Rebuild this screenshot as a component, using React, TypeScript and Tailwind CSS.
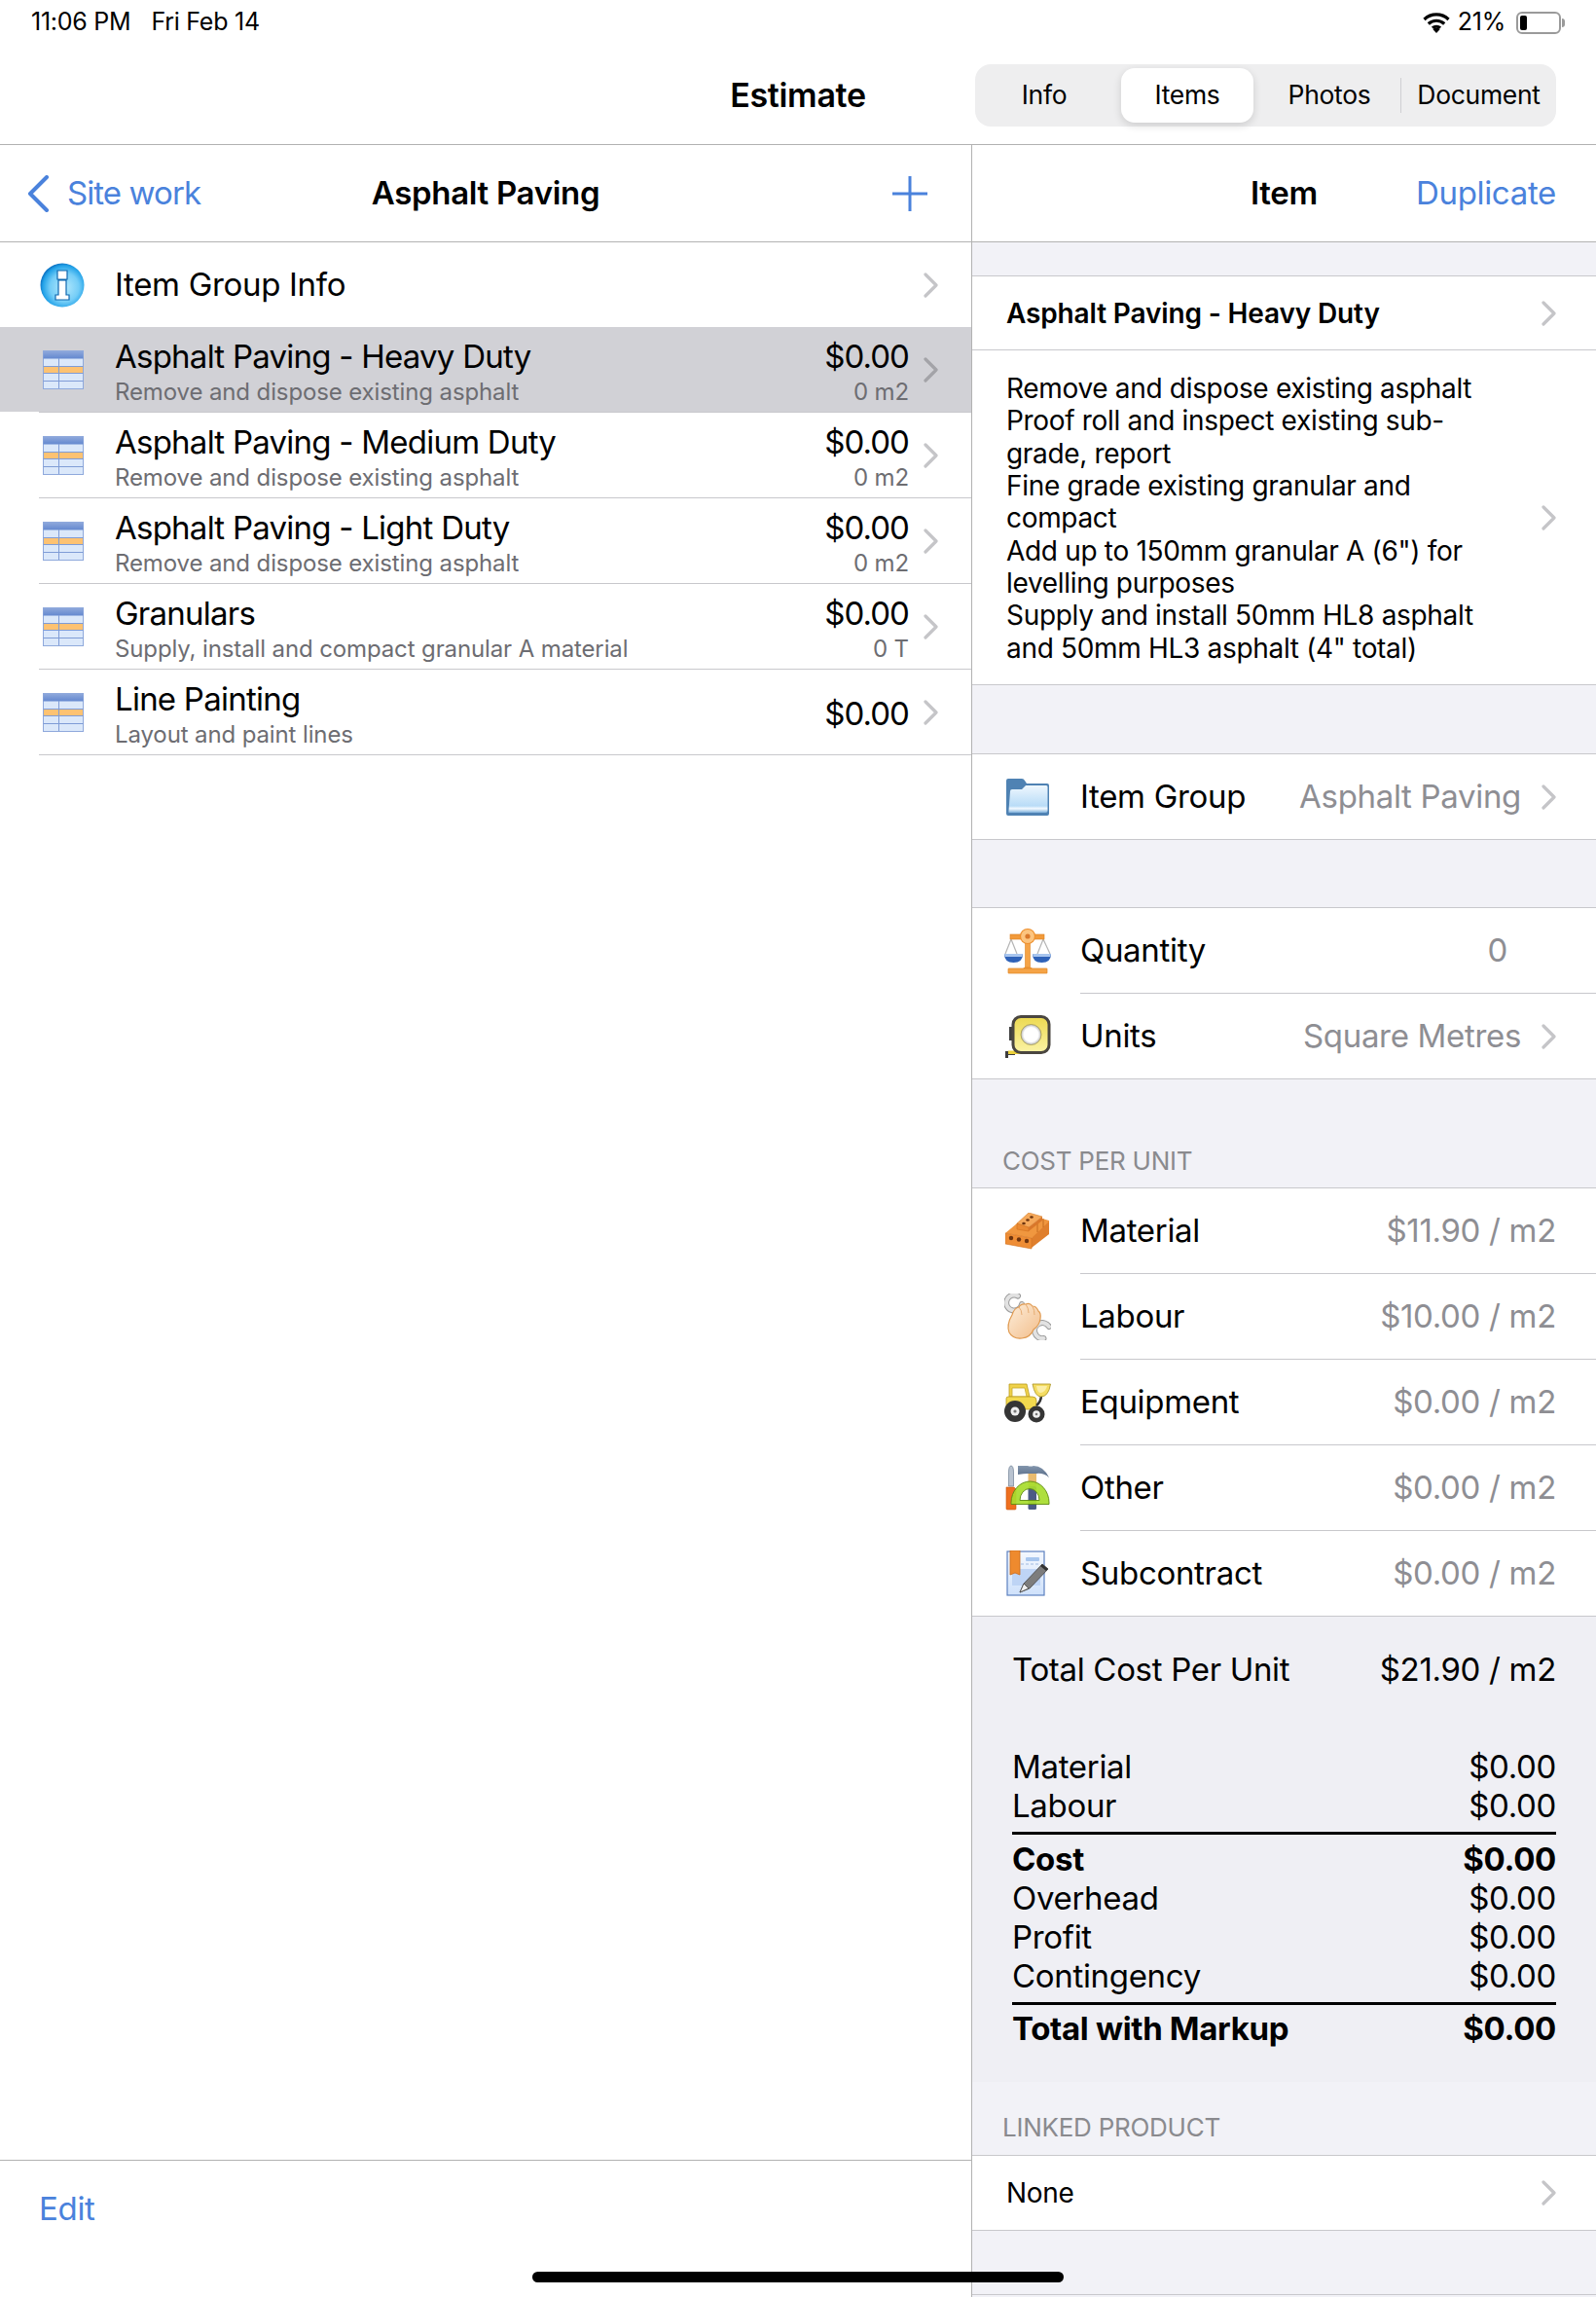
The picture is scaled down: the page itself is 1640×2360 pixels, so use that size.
import type { ReactNode } from 'react';

const Chevron = ({ selected = false }: { selected?: boolean }) => (
  <svg width="15" height="26" viewBox="0 0 15 26" fill="none" className="shrink-0">
    <path
      d="M2 2l11 11L2 24"
      stroke={selected ? '#a3a3a8' : '#c5c5c8'}
      strokeWidth="3.2"
      strokeLinecap="round"
      strokeLinejoin="round"
    />
  </svg>
);

const InfoIcon = () => (
  <svg width="46" height="46" viewBox="0 0 46 46">
    <defs>
      <radialGradient id="infoBg" cx="55%" cy="55%" r="55%">
        <stop offset="0" stopColor="#b5e9fd" />
        <stop offset="0.6" stopColor="#74cdf7" />
        <stop offset="0.9" stopColor="#22a2e8" />
        <stop offset="1" stopColor="#1079c8" />
      </radialGradient>
    </defs>
    <circle cx="23" cy="23" r="22.5" fill="url(#infoBg)" />
    <path d="M18 8h10v9H18zM19 18h8v15h3v5H16v-5h3z" fill="#fff" stroke="#0f68b0" strokeWidth="1.2" />
  </svg>
);

const TableIcon = () => (
  <svg width="44" height="40" viewBox="0 0 44 40">
    <defs>
      <linearGradient id="tableHead" x1="0" y1="0" x2="0" y2="1">
        <stop offset="0" stopColor="#8fa9dc" />
        <stop offset="1" stopColor="#6488cf" />
      </linearGradient>
    </defs>
    <rect x="1.5" y="0.5" width="41" height="39" fill="#dbe8fa" stroke="#8fa9dc" />
    <rect x="1.500" y="0.5" width="41" height="8" fill="url(#tableHead)" />
    <rect x="2" y="17" width="40" height="6" fill="#fdc272" />
    <path d="M1.500 16.500h41M1.500 23.500h41M1.500 31.500h41M17.500 8v31" stroke="#7f9cd6" strokeWidth="1" />
  </svg>
);

const FolderIcon = () => (
  <svg width="46" height="40" viewBox="0 0 46 40">
    <defs>
      <linearGradient id="folderFront" x1="0" y1="0" x2="0" y2="1">
        <stop offset="0" stopColor="#eef7fe" />
        <stop offset="0.75" stopColor="#b9dcf7" />
        <stop offset="0.85" stopColor="#f4faff" />
        <stop offset="1" stopColor="#7db0dc" />
      </linearGradient>
    </defs>
    <path d="M1 3q0-2 2-2h14q2 0 3 2l2 3h21q2 0 2 2v29q0 2-2 2H3q-2 0-2-2z" fill="#4f82b3" />
    <path d="M5 14q0-2 2-2h10l4-4h21q1.500 0 1.500 1.500V34q0 2-2 2H4q-1 0-.5-2z" fill="url(#folderFront)" />
  </svg>
);

const ScalesIcon = () => (
  <svg width="48" height="48" viewBox="0 0 48 48">
    <path d="M7 12L1 27M7 12l6 15M40 12l-6 15M40 12l7 15" stroke="#b5b5b5" strokeWidth="1.2" fill="none" />
    <rect x="6" y="7" width="35" height="5" fill="#f29a3a" stroke="#d97f1e" strokeWidth="0.6" />
    <rect x="21.500" y="12" width="5" height="29" fill="#f5a346" stroke="#dd8425" strokeWidth="0.6" />
    <circle cx="24" cy="9" r="7.500" fill="#fcc47f" stroke="#ee8f2c" strokeWidth="1.2" />
    <circle cx="24" cy="9" r="2.600" fill="#d9782b" />
    <path d="M0 27h19q0 9-9.500 9T0 27z" fill="#2f62b8" />
    <path d="M0 27h19q-.4 2-1 3H1q-.6-1-1-3z" fill="#a8c5ee" />
    <path d="M29 27h19q0 9-9.500 9T29 27z" fill="#2f62b8" />
    <path d="M29 27h19q-.4 2-1 3H30q-.6-1-1-3z" fill="#a8c5ee" />
    <path d="M20 41h8l1 2h-10z" fill="#ee9434" />
    <rect x="4" y="42" width="40" height="5" rx="0.5" fill="#f5a346" stroke="#e08726" strokeWidth="0.7" />
  </svg>
);

const TapeIcon = () => (
  <svg width="48" height="44" viewBox="0 0 48 44">
    <defs>
      <linearGradient id="tapeBody" x1="0" y1="0" x2="0" y2="1">
        <stop offset="0" stopColor="#ecd94f" />
        <stop offset="1" stopColor="#fbf3a6" />
      </linearGradient>
      <radialGradient id="tapeHole" cx="50%" cy="50%" r="50%">
        <stop offset="0.7" stopColor="#fff" />
        <stop offset="1" stopColor="#b6b6b6" />
      </radialGradient>
    </defs>
    <path d="M1 37h10v4H4v3H1z" fill="#3d3d3d" />
    <rect x="4" y="36.500" width="14" height="3.500" fill="#ecd13a" />
    <rect x="5" y="12" width="6" height="14" fill="#3f3f3f" />
    <rect x="9" y="1.500" width="37" height="37" rx="8" fill="url(#tapeBody)" stroke="#4a4640" strokeWidth="3" />
    <circle cx="27.500" cy="20" r="10.500" fill="url(#tapeHole)" stroke="#a69a4f" strokeWidth="0.8" />
  </svg>
);

const BrickIcon = () => (
  <svg width="46" height="38" viewBox="0 0 46 38">
    {/* lower layer */}
    <path d="M0 21L12 11l12 4L38 6l7 2v14L27 26z" fill="#f0973f" />
    <path d="M27 26L45 9v13L27 36z" fill="#df7f2d" />
    <path d="M33 20V10M39 15V6" stroke="#b85f18" strokeWidth="0.8" />
    <path d="M0 21l27 5v11L0 32z" fill="#ee8d35" stroke="#d0701f" strokeWidth="0.6" />
    {/* top brick */}
    <path d="M12 11L24 0l14 4-14 11z" fill="#f5a95b" stroke="#d97f2a" strokeWidth="0.6" />
    <path d="M12 11l12 4v4l-12-2z" fill="#ea8a33" stroke="#d0701f" strokeWidth="0.6" />
    <path d="M24 15L38 4v4L24 19z" fill="#d9772a" />
    <g fill="#6e3510">
      <circle cx="6" cy="26" r="2.200" />
      <circle cx="14" cy="27.500" r="2.200" />
      <circle cx="22" cy="29" r="2.200" />
      <ellipse cx="19" cy="11" rx="1.800" ry="1.200" />
      <ellipse cx="23" cy="7.500" rx="1.800" ry="1.200" />
      <ellipse cx="27" cy="4.500" rx="1.800" ry="1.200" />
    </g>
  </svg>
);

const HandIcon = () => (
  <svg width="48" height="48" viewBox="0 0 48 48">
    <defs>
      <linearGradient id="handFill" x1="0" y1="0" x2="1" y2="1">
        <stop offset="0" stopColor="#fdeedb" />
        <stop offset="1" stopColor="#f2bd8a" />
      </linearGradient>
    </defs>
    <g fill="none" strokeLinecap="round">
      <path d="M14 2.500A8 8 0 1 0 18 11" stroke="#9a9a9a" strokeWidth="6" />
      <path d="M46 34A8 8 0 1 0 40.500 46" stroke="#9a9a9a" strokeWidth="6" />
      <path d="M14 2.500A8 8 0 1 0 18 11" stroke="#e2e2e2" strokeWidth="4" />
      <path d="M46 34A8 8 0 1 0 40.500 46" stroke="#e2e2e2" strokeWidth="4" />
    </g>
    <path
      d="M8 22Q10 15 15 14 17 10 22 11 26 9 29 13 33 13 35 18 38 20 37 26 36 33 30 37 27 45 18 46 9 47 5 40 2 32 8 22z"
      fill="url(#handFill)"
      stroke="#e09a50"
      strokeWidth="1.200"
    />
    <path d="M15 14q3 3 3 8M22 11q3 4 3 9M29 13q2 4 2 9" stroke="#e6ad74" strokeWidth="1" fill="none" />
  </svg>
);

const TractorIcon = () => (
  <svg width="48" height="42" viewBox="0 0 48 42">
    <path d="M5 2h18l3 13H5z" fill="#f0d24a" stroke="#b79a1f" strokeWidth="0.8" />
    <path d="M8 6h13l2 9H8z" fill="#fffdf0" stroke="#c4a72a" strokeWidth="0.8" />
    <path d="M2 17q0-2 2-2h25q4 0 4 4v9H2z" fill="#f2d94e" stroke="#b79a1f" strokeWidth="0.8" />
    <path d="M33 24q5-4 5-11" stroke="#333" strokeWidth="2.500" fill="none" />
    <path d="M29 2h18.500q-2 13-10 13-6 0-8.500-13z" fill="#f4dc62" stroke="#a89020" strokeWidth="0.8" />
    <path d="M33 4h11q-2 7-7 7-3 0-4-7z" fill="#fbeea6" />
    <circle cx="11" cy="30" r="11" fill="#353535" />
    <circle cx="11" cy="30" r="4.500" fill="#efefef" />
    <circle cx="11" cy="30" r="1.600" fill="#777" />
    <circle cx="33" cy="33" r="8.500" fill="#353535" />
    <circle cx="33" cy="33" r="3.800" fill="#efefef" />
    <circle cx="33" cy="33" r="1.300" fill="#777" />
  </svg>
);

const ToolsIcon = () => (
  <svg width="46" height="48" viewBox="0 0 46 48">
    <defs>
      <linearGradient id="hammerHead" x1="0" y1="0" x2="0" y2="1">
        <stop offset="0" stopColor="#8396ad" />
        <stop offset="1" stopColor="#566a86" />
      </linearGradient>
    </defs>
    <rect x="23.500" y="8" width="8.500" height="14" fill="#e9bb6e" />
    <rect x="23.500" y="22" width="8.500" height="24" rx="1.500" fill="#4b5a85" />
    <path d="M13 1h10q3 1 6 0 10 0 16 12-6-5-13-4H23q-4 0-10 1z" fill="url(#hammerHead)" />
    <path d="M3.500 8q0-7 2.500-7t2.500 7v14h-5z" fill="#b9c3d0" stroke="#6f7f94" strokeWidth="0.7" />
    <path d="M1 23h8l2 2v20q0 1-1 1H2q-1 0-1-1z" fill="#ee6f1f" stroke="#c7530f" strokeWidth="0.6" />
    <path
      fillRule="evenodd"
      d="M6 39A19.500 22 0 0 1 45 39v1.500H6zM15 36.500h20A10 12 0 0 0 15 36.500z"
      fill="#a7dc2c"
      fillOpacity="0.92"
      stroke="#5e8a12"
      strokeWidth="0.9"
    />
  </svg>
);

const DocIcon = () => (
  <svg width="44" height="48" viewBox="0 0 44 48">
    <defs>
      <linearGradient id="docFill" x1="0" y1="0" x2="0" y2="1">
        <stop offset="0" stopColor="#f4f8fe" />
        <stop offset="1" stopColor="#cfe1fb" />
      </linearGradient>
    </defs>
    <rect x="1" y="1" width="38" height="45" fill="url(#docFill)" stroke="#5c80c0" strokeWidth="1.200" />
    <rect x="20" y="7" width="14" height="4" rx="1" fill="#a8c6ee" />
    <path d="M15 14h20" stroke="#b9cdea" strokeWidth="1.500" strokeDasharray="3 2" />
    <rect x="6" y="19" width="29" height="17" fill="#bed4f5" />
    <path d="M4 0h10v25l-5-2-5 2z" fill="#ee8a2e" stroke="#c8691a" strokeWidth="0.8" />
    <path d="M14 43l4-9L37 14l6 5-19 20z" fill="#7d7d7d" stroke="#444" strokeWidth="0.8" />
    <path d="M14 43l4-9 5 5z" fill="#efefef" stroke="#444" strokeWidth="0.8" />
    <path d="M37 14l6 5-2 2-6-5z" fill="#333" />
  </svg>
);

const WifiIcon = () => (
  <svg width="28" height="22" viewBox="0 0 28 22">
    <path d="M1.500 8a18 18 0 0 1 25 0M5.800 12.500a12 12 0 0 1 16.400 0M10 16.800a6 6 0 0 1 8 0" stroke="#000" strokeWidth="3.200" fill="none" />
    <path d="M14 22l-3.500-3.800a5 5 0 0 1 7 0z" fill="#000" />
  </svg>
);

const listItems = [
  { title: 'Asphalt Paving - Heavy Duty', sub: 'Remove and dispose existing asphalt', amount: '$0.00', qty: '0 m2', selected: true },
  { title: 'Asphalt Paving - Medium Duty', sub: 'Remove and dispose existing asphalt', amount: '$0.00', qty: '0 m2' },
  { title: 'Asphalt Paving - Light Duty', sub: 'Remove and dispose existing asphalt', amount: '$0.00', qty: '0 m2' },
  { title: 'Granulars', sub: 'Supply, install and compact granular A material', amount: '$0.00', qty: '0 T' },
  { title: 'Line Painting', sub: 'Layout and paint lines', amount: '$0.00', qty: '' },
];

const descLines = [
  'Remove and dispose existing asphalt',
  'Proof roll and inspect existing sub-',
  'grade, report',
  'Fine grade existing granular and',
  'compact',
  'Add up to 150mm granular A (6") for',
  'levelling purposes',
  'Supply and install 50mm HL8 asphalt',
  'and 50mm HL3 asphalt (4" total)',
];

const costRows = [
  { icon: <BrickIcon />, label: 'Material', value: '$11.90 / m2' },
  { icon: <HandIcon />, label: 'Labour', value: '$10.00 / m2' },
  { icon: <TractorIcon />, label: 'Equipment', value: '$0.00 / m2' },
  { icon: <ToolsIcon />, label: 'Other', value: '$0.00 / m2' },
  { icon: <DocIcon />, label: 'Subcontract', value: '$0.00 / m2' },
];

const DetailRow = ({ icon, label, value, chevron }: { icon: ReactNode; label: string; value: string; chevron?: boolean }) => (
  <div className="flex h-[87px] items-center bg-white pl-[33px] pr-[41px]">
    <div className="flex w-[48px] shrink-0 items-center justify-center">{icon}</div>
    <span className="ml-[30px] text-[33px] text-black">{label}</span>
    <span className={`ml-auto text-[33px] text-[#8e8e93] ${chevron ? 'mr-[21px]' : ''}`}>{value}</span>
    {chevron && <Chevron />}
  </div>
);

const SummaryRow = ({ label, value, bold }: { label: string; value: string; bold?: boolean }) => (
  <div className={`flex h-[40px] items-center justify-between text-[33px] text-black ${bold ? 'font-bold' : ''}`}>
    <span>{label}</span>
    <span>{value}</span>
  </div>
);

export default function App() {
  return (
    <div className="relative flex h-[2360px] w-[1640px] flex-col overflow-hidden bg-white font-['Inter',sans-serif] tracking-[-0.02em]">
      {/* status bar */}
      <div className="flex h-[46px] items-center pl-[32px] pr-[32px] text-[25px] tracking-[-0.01em] text-black">
        <span>11:06 PM</span>
        <span className="ml-[21px]">Fri Feb 14</span>
        <div className="ml-auto flex items-center">
          <WifiIcon />
          <span className="ml-[8px]">21%</span>
          <div className="ml-[11px] flex h-[23px] w-[46px] items-center rounded-[6px] border-2 border-[#9a9a9a] px-[2px]">
            <div className="h-[15px] w-[7px] rounded-[2px] bg-black" />
          </div>
          <div className="ml-[1px] h-[9px] w-[3px] rounded-r-full bg-[#9a9a9a]" />
        </div>
      </div>

      {/* top nav */}
      <div className="relative flex h-[103px] items-center justify-center border-b border-[#b2b2b2]">
        <span className="text-[34px] font-semibold text-black">Estimate</span>
        <div className="absolute left-[1002px] top-[20px] flex h-[64px] w-[597px] items-center rounded-[16px] bg-[#eeeeef] text-[26.5px] text-black">
          <span className="w-[142px] text-center">Info</span>
          <span className="ml-[8px] flex h-[56px] w-[136px] items-center justify-center rounded-[14px] bg-white shadow-[0_3px_8px_rgba(0,0,0,0.14)]">Items</span>
          <span className="w-[151px] pl-[5px] text-center">Photos</span>
          <span className="h-[36px] w-px bg-[#cfcfd2]" />
          <span className="flex-1 text-center">Document</span>
        </div>
      </div>

      <div className="flex min-h-0 flex-1">
        {/* left pane */}
        <div className="flex w-[999px] shrink-0 flex-col border-r border-[#b2b2b2]">
          <div className="relative flex h-[100px] shrink-0 items-center justify-center border-b border-[#b2b2b2]">
            <div className="absolute left-[27px] flex items-center">
              <svg width="24" height="38" viewBox="0 0 24 38" fill="none">
                <path d="M21 2L4 19l17 17" stroke="#4a82dc" strokeWidth="4" strokeLinecap="round" strokeLinejoin="round" />
              </svg>
              <span className="ml-[18px] text-[33px] tracking-[-0.028em] text-[#4a82dc]">Site work</span>
            </div>
            <span className="text-[33px] font-semibold text-black">Asphalt Paving</span>
            <svg className="absolute left-[917px]" width="36" height="36" viewBox="0 0 36 36" fill="none">
              <path d="M18 0v36M0 18h36" stroke="#4a82dc" strokeWidth="3" />
            </svg>
          </div>

          <div className="flex h-[87px] shrink-0 items-center pl-[41px] pr-[34px]">
            <InfoIcon />
            <span className="ml-[31px] text-[33px] text-black">Item Group Info</span>
            <span className="ml-auto"><Chevron /></span>
          </div>

          {listItems.map((item) => (
            <div key={item.title}>
              <div className={`flex h-[87px] items-center pl-[43px] pr-[34px] ${item.selected ? 'bg-[#d1d1d6]' : ''}`}>
                <TableIcon />
                <div className="ml-[31px] flex min-w-0 flex-1 flex-col pt-[3px]">
                  <span className="text-[33px] leading-[43px] tracking-[-0.023em] text-black">{item.title}</span>
                  <span className="text-[24px] leading-[30px] tracking-[-0.005em] text-[#6d6d72]">{item.sub}</span>
                </div>
                <div className="mr-[15px] flex flex-col items-end pt-[3px]">
                  <span className="text-[33px] leading-[43px] tracking-[-0.028em] text-black">{item.amount}</span>
                  {item.qty && <span className="text-[24px] leading-[30px] tracking-[-0.005em] text-[#6d6d72]">{item.qty}</span>}
                </div>
                <Chevron selected={item.selected} />
              </div>
              <div className="ml-[40px] h-px bg-[#c8c8cc]" />
            </div>
          ))}

          <div className="mt-auto flex h-[141px] shrink-0 items-start border-t border-[#b2b2b2] pl-[40px] pt-[25px]">
            <span className="text-[33px] text-[#4a82dc]">Edit</span>
          </div>
        </div>

        {/* right pane */}
        <div className="flex min-w-0 flex-1 flex-col bg-[#f2f2f7]">
          <div className="relative flex h-[100px] shrink-0 items-center justify-center border-b border-[#b2b2b2] bg-white">
            <span className="text-[33px] font-semibold text-black">Item</span>
            <span className="absolute right-[41px] text-[33px] text-[#4a82dc]">Duplicate</span>
          </div>

          <div className="h-[34px] shrink-0" />

          <div className="shrink-0 border-y border-[#c8c8cc] bg-white">
            <div className="flex h-[76px] items-center border-b border-[#c8c8cc] pl-[35px] pr-[41px]">
              <span className="text-[28px] font-semibold tracking-[-0.005em] text-black">Asphalt Paving - Heavy Duty</span>
              <span className="ml-auto"><Chevron /></span>
            </div>
            <div className="flex h-[343px] items-center pl-[35px] pr-[41px]">
              <div className="pt-[3px] text-[28px] leading-[33.3px] text-black">
                {descLines.map((line) => (
                  <div key={line}>{line}</div>
                ))}
              </div>
              <span className="ml-auto"><Chevron /></span>
            </div>
          </div>

          <div className="h-[70px] shrink-0" />

          <div className="shrink-0 border-y border-[#c8c8cc]">
            <DetailRow icon={<FolderIcon />} label="Item Group" value="Asphalt Paving" chevron />
          </div>

          <div className="h-[69px] shrink-0" />

          <div className="shrink-0 border-y border-[#c8c8cc] bg-white">
            <div className="flex h-[87px] items-center pl-[33px] pr-[91px]">
              <div className="flex w-[48px] shrink-0 items-center justify-center"><ScalesIcon /></div>
              <span className="ml-[30px] text-[33px] text-black">Quantity</span>
              <span className="ml-auto text-[33px] text-[#8e8e93]">0</span>
            </div>
            <div className="ml-[111px] h-px bg-[#c8c8cc]" />
            <DetailRow icon={<TapeIcon />} label="Units" value="Square Metres" chevron />
          </div>

          <div className="flex h-[111px] shrink-0 items-end pb-[8px] pl-[31px] text-[26px] tracking-[-0.01em] text-[#8a8a8e]">COST PER UNIT</div>

          <div className="shrink-0 border-y border-[#c8c8cc] bg-white">
            {costRows.map((row, i) => (
              <div key={row.label}>
                {i > 0 && <div className="ml-[111px] h-px bg-[#c8c8cc]" />}
                <DetailRow icon={row.icon} label={row.label} value={row.value} />
              </div>
            ))}
          </div>

          <div className="h-[478px] shrink-0 bg-[#efeff4] pl-[41px] pr-[41px] pt-[35px]">
            <div className="flex h-[40px] items-center justify-between text-[33px] text-black">
              <span>Total Cost Per Unit</span>
              <span>$21.90 / m2</span>
            </div>
            <div className="mt-[60px]">
              <SummaryRow label="Material" value="$0.00" />
              <SummaryRow label="Labour" value="$0.00" />
              <div className="my-[6px] h-[3px] bg-black" />
              <SummaryRow label="Cost" value="$0.00" bold />
              <SummaryRow label="Overhead" value="$0.00" />
              <SummaryRow label="Profit" value="$0.00" />
              <SummaryRow label="Contingency" value="$0.00" />
              <div className="mt-[6px] mb-[5px] h-[3px] bg-black" />
              <SummaryRow label="Total with Markup" value="$0.00" bold />
            </div>
          </div>

          <div className="flex h-[75px] shrink-0 items-end pb-[9px] pl-[31px] text-[26px] tracking-[-0.01em] text-[#8a8a8e]">LINKED PRODUCT</div>

          <div className="flex h-[78px] shrink-0 items-center border-y border-[#c8c8cc] bg-white pl-[35px] pr-[41px]">
            <span className="text-[28px] text-black">None</span>
            <span className="ml-auto"><Chevron /></span>
          </div>

          <div className="mt-[65px] h-px shrink-0 bg-[#c8c8cc]" />
        </div>
      </div>

      <div className="absolute left-[547px] top-[2334px] h-[11px] w-[546px] rounded-full bg-black" />
    </div>
  );
}
